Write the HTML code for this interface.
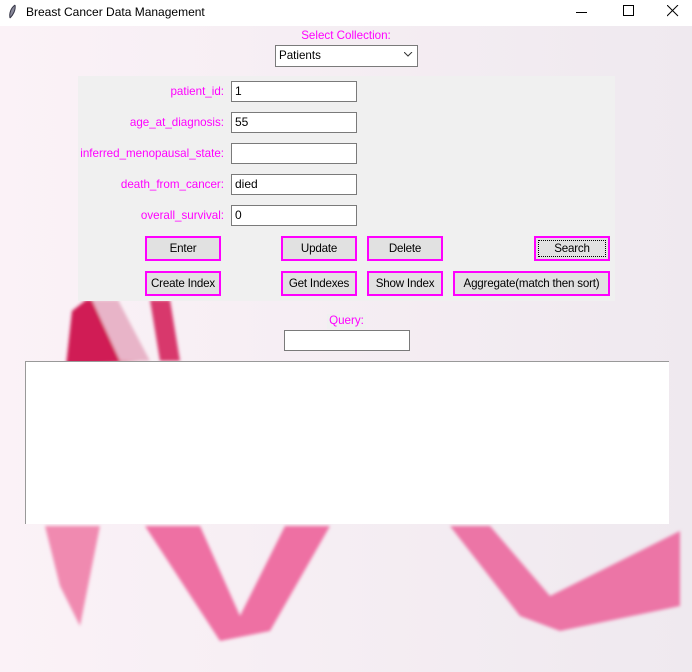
<!DOCTYPE html>
<html><head><style>
body{margin:0;width:692px;height:672px;overflow:hidden;font-family:"Liberation Sans",sans-serif;font-size:11.6px;position:relative;background:#f8f1f5}
.a{position:absolute}
.tb{left:0;top:0;width:692px;height:26px;background:#fff}
.lbl{color:#ff00ff;text-align:right;width:200px;left:24px;font-size:11.6px}
.ent{background:#fff;border:1px solid #7a7a7a;box-sizing:border-box;height:21px;width:126px;left:231px;padding:2px 3px;font-size:12px;line-height:15px}
.btn{background:#e1e1e1;border:2px solid #ff00ff;box-sizing:border-box;height:25px;text-align:center;line-height:22px;font-size:11.6px;color:#000;white-space:nowrap;letter-spacing:-0.2px}
</style></head><body>
<svg class="a" style="left:0;top:26px" width="692" height="646">
<defs><linearGradient id="g" x1="0" x2="1"><stop offset="0" stop-color="#fbf2f7"/><stop offset="1" stop-color="#efe9ef"/></linearGradient>
<filter id="b"><feGaussianBlur stdDeviation="1.5"/></filter></defs>
<rect width="692" height="646" fill="url(#g)"/>
<g filter="url(#b)">
<polygon points="66,340 72,285 86,274 118,274 140,335" fill="#d01f55"/>
<polygon points="92,274 118,274 150,335 120,335" fill="#e8b4c8"/>
<polygon points="150,274 170,274 180,335 160,335" fill="#d8396c"/>
<polygon points="45,500 100,500 80,600 60,560" fill="#f08ab0"/>
<polygon points="145,500 200,500 240,590 255,560 285,500 330,500 270,605 220,615" fill="#ee6fa3"/>
<polygon points="450,500 490,500 550,570 680,505 680,580 560,605 520,590" fill="#ec75a6"/>
</g>
</svg>
<div class="a tb"></div>
<svg class="a" style="left:6px;top:4px" width="12" height="16"><path d="M9 1 C5 4 3 9 4 14 M9 1 C10 6 7 11 4 14" stroke="#334" fill="#889" stroke-width="1"/></svg>
<div class="a" style="left:26px;top:5px;font-size:12px">Breast Cancer Data Management</div>
<div class="a" style="left:576px;top:12px;width:11px;height:1px;background:#000"></div>
<div class="a" style="left:623px;top:5px;width:9px;height:9px;border:1px solid #000"></div>
<svg class="a" style="left:667px;top:5px" width="12" height="12"><path d="M0 0L11 11M11 0L0 11" stroke="#000"/></svg>
<div class="a" style="left:0;top:29px;width:692px;text-align:center;color:#ff00ff">Select Collection:</div>
<div class="a" style="left:275px;top:45px;width:143px;height:22px;background:#fff;border:1px solid #7a7a7a;box-sizing:border-box;padding:3px 3px">Patients</div>
<svg class="a" style="left:404px;top:52px" width="9" height="6"><path d="M0 0L4 4L8 0" stroke="#333" fill="none"/></svg>
<div class="a" style="left:78px;top:76px;width:537px;height:225px;background:#f0f0f0"></div>
<div class="a lbl" style="top:85px">patient_id:</div>
<div class="a lbl" style="top:116px">age_at_diagnosis:</div>
<div class="a lbl" style="top:147px">inferred_menopausal_state:</div>
<div class="a lbl" style="top:178px">death_from_cancer:</div>
<div class="a lbl" style="top:209px">overall_survival:</div>
<div class="a ent" style="top:81px">1</div>
<div class="a ent" style="top:112px">55</div>
<div class="a ent" style="top:143px"></div>
<div class="a ent" style="top:174px">died</div>
<div class="a ent" style="top:205px">0</div>
<div class="a btn" style="left:145px;top:236px;width:76px">Enter</div>
<div class="a btn" style="left:281px;top:236px;width:76px">Update</div>
<div class="a btn" style="left:367px;top:236px;width:76px">Delete</div>
<div class="a btn" style="left:534px;top:236px;width:76px;outline:1px dotted #000;outline-offset:-5px">Search</div>
<div class="a btn" style="left:145px;top:271px;width:76px">Create Index</div>
<div class="a btn" style="left:281px;top:271px;width:76px">Get Indexes</div>
<div class="a btn" style="left:367px;top:271px;width:76px">Show Index</div>
<div class="a btn" style="left:453px;top:271px;width:157px">Aggregate(match then sort)</div>
<div class="a" style="left:327px;top:314px;width:39px;height:15px;background:#f0f0f0;color:#ff00ff;text-align:center">Query:</div>
<div class="a" style="left:284px;top:330px;width:126px;height:21px;background:#fff;border:1px solid #7a7a7a;box-sizing:border-box"></div>
<div class="a" style="left:25px;top:361px;width:644px;height:163px;background:#fff;border-top:1px solid #999;border-left:1px solid #999;box-sizing:border-box"></div>
</body></html>
